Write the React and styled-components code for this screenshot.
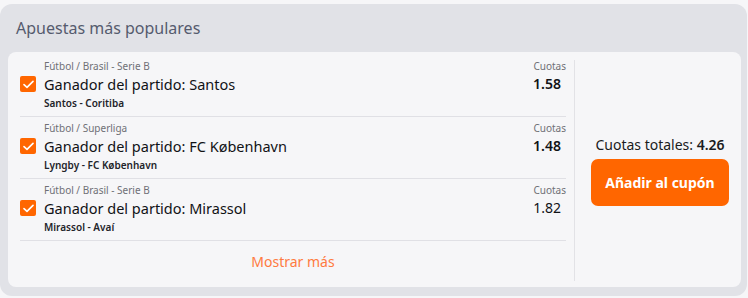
import React from 'react';
import styled, { createGlobalStyle } from 'styled-components';

const GlobalStyle = createGlobalStyle`
  html, body {
    margin: 0;
    padding: 0;
    background: #f6f6f8;
  }
  body {
    font-family: "Noto Sans", "Open Sans", sans-serif;
    padding: 4px 1px 2px 0;
  }
  * { box-sizing: border-box; }
`;

const Panel = styled.section`
  background: #e1e2e7;
  border-radius: 12px;
  padding: 0 6px 9px 8px;
`;

const Heading = styled.h2`
  margin: 0;
  padding: 0 0 0 8px;
  height: 48px;
  line-height: 48px;
  font-size: 16px;
  font-weight: 400;
  color: #555b6e;
`;

const Card = styled.div`
  display: flex;
  background: #f6f6f8;
  border-radius: 8px;
  padding: 3px 12px 6px 12px;
`;

const List = styled.div`
  flex: 1;
  display: flex;
  flex-direction: column;
  margin-right: 8px;
`;

const Row = styled.div`
  display: grid;
  grid-template-columns: 16px 1fr auto;
  grid-template-areas:
    ". cat lbl"
    "chk title odds"
    ". match .";
  column-gap: 8px;
  padding: 4px 0 5px;
  border-bottom: 1px solid #e0e0e5;
`;

const Check = styled.span`
  grid-area: chk;
  align-self: center;
  width: 16px;
  height: 16px;
  border-radius: 2px;
  background: #ff6600;
  display: flex;
  align-items: center;
  justify-content: center;
`;

const Category = styled.div`
  grid-area: cat;
  font-size: 10px;
  line-height: 14px;
  color: #6f7076;
`;

const Title = styled.div`
  grid-area: title;
  font-size: 14.5px;
  line-height: 22px;
  font-weight: 400;
  color: #111216;
`;

const Match = styled.div`
  grid-area: match;
  font-size: 10px;
  line-height: 16px;
  font-weight: 600;
  color: #23242a;
`;

const OddsLabel = styled.div`
  grid-area: lbl;
  text-align: right;
  font-size: 10px;
  line-height: 14px;
  color: #6f7076;
`;

const Odds = styled.div`
  grid-area: odds;
  text-align: right;
  padding-right: 5px;
  font-size: 14px;
  line-height: 22px;
  font-weight: ${(p) => p.$weight || 600};
  color: #111216;
`;

const More = styled.button`
  height: 40px;
  border: 0;
  background: none;
  font-family: inherit;
  font-size: 14px;
  color: #ff7a40;
  cursor: pointer;
`;

const Side = styled.aside`
  width: 155px;
  flex-shrink: 0;
  margin-top: 5px;
  border-left: 1px solid #e2e2e6;
  padding-left: 16px;
  display: flex;
  flex-direction: column;
  justify-content: center;
  align-items: stretch;
  gap: 4px;
`;

const Total = styled.div`
  text-align: center;
  font-size: 14px;
  line-height: 20px;
  color: #1a1b20;

  b {
    font-weight: 600;
  }
`;

const AddButton = styled.button`
  height: 47px;
  border: 0;
  border-radius: 7px;
  background: #ff6600;
  color: #fff;
  font-family: inherit;
  font-size: 14px;
  font-weight: 700;
  cursor: pointer;
`;

const bets = [
  { cat: 'Fútbol / Brasil - Serie B', pick: 'Ganador del partido: Santos', match: 'Santos - Coritiba', odds: '1.58' },
  { cat: 'Fútbol / Superliga', pick: 'Ganador del partido: FC København', match: 'Lyngby - FC København', odds: '1.48' },
  { cat: 'Fútbol / Brasil - Serie B', pick: 'Ganador del partido: Mirassol', match: 'Mirassol - Avaí', odds: '1.82', weight: 400 },
];

function Tick() {
  return (
    <svg width="11" height="9" viewBox="0 0 11 9" fill="none">
      <path d="M1 4.6 L4 7.4 L10 1.4" stroke="#fff" strokeWidth="1.6" strokeLinecap="round" strokeLinejoin="round" />
    </svg>
  );
}

function App() {
  return (
    <>
      <GlobalStyle />
      <Panel>
        <Heading>Apuestas más populares</Heading>
        <Card>
          <List>
            {bets.map((b) => (
              <Row key={b.pick}>
                <Category>{b.cat}</Category>
                <OddsLabel>Cuotas</OddsLabel>
                <Check><Tick /></Check>
                <Title>{b.pick}</Title>
                <Odds $weight={b.weight}>{b.odds}</Odds>
                <Match>{b.match}</Match>
              </Row>
            ))}
            <More>Mostrar más</More>
          </List>
          <Side>
            <Total>Cuotas totales: <b>4.26</b></Total>
            <AddButton>Añadir al cupón</AddButton>
          </Side>
        </Card>
      </Panel>
    </>
  );
}

export default App;
